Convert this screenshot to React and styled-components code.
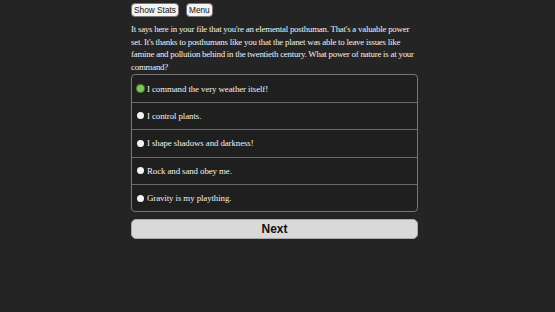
import React, { useState } from "react";
import styled, { createGlobalStyle } from "styled-components";

const Global = createGlobalStyle`
  html, body {
    margin: 0;
    background: #242424;
    color: #eeeeee;
  }
`;

const Page = styled.div`
  box-sizing: border-box;
  width: 293px;
  padding-right: 6px;
  margin: 0 auto;
  padding-top: 3px;
`;

const Toolbar = styled.div`
  display: flex;
  gap: 7px;
`;

const ToolButton = styled.button`
  font-family: "Liberation Sans", Arial, sans-serif;
  font-size: 8.3px;
  line-height: 10px;
  padding: 1px 2px;
  background: #f4f4f4;
  color: #111;
  border: 1px solid #777;
  border-radius: 4px;
`;

const Story = styled.p`
  margin: 6px 0 0;
  font-family: "Liberation Serif", "Times New Roman", serif;
  font-size: 8.9px;
  letter-spacing: -0.24px;
  line-height: 12.6px;
  color: #f0f0f0;
`;

const Choices = styled.div`
  margin-top: 1px;
  border: 1px solid #777;
  border-radius: 4px;
  overflow: hidden;
  background: #1f1f1f;
`;

const Choice = styled.label`
  display: flex;
  align-items: center;
  gap: 3px;
  height: 26.4px;
  padding-left: 5px;
  font-family: "Liberation Serif", "Times New Roman", serif;
  font-size: 8.9px;
  letter-spacing: -0.1px;
  color: #f0f0f0;
  cursor: pointer;
  & + & {
    border-top: 1px solid #6a6a6a;
  }
`;

const Dot = styled.span`
  width: 7px;
  height: 7px;
  border-radius: 50%;
  background: ${(p) => (p.$on ? "#7fc35b" : "#f4f4f4")};
  box-shadow: ${(p) => (p.$on ? "0 0 0 1px #4f7d3a" : "none")};
  flex: none;
`;

const NextButton = styled.button`
  display: block;
  width: 100%;
  margin-top: 7px;
  height: 20px;
  font-family: "Liberation Sans", Arial, sans-serif;
  font-weight: bold;
  font-size: 12px;
  color: #111;
  background: #d9d9d9;
  border: 1px solid #aaa;
  border-radius: 5px;
`;

const options = [
  "I command the very weather itself!",
  "I control plants.",
  "I shape shadows and darkness!",
  "Rock and sand obey me.",
  "Gravity is my plaything.",
];

export default function App() {
  const [picked, setPicked] = useState(0);
  return (
    <>
      <Global />
      <Page>
        <Toolbar>
          <ToolButton>Show Stats</ToolButton>
          <ToolButton>Menu</ToolButton>
        </Toolbar>
        <Story>
          It says here in your file that you're an elemental posthuman. That's a valuable power
          set. It's thanks to posthumans like you that the planet was able to leave issues like
          famine and pollution behind in the twentieth century. What power of nature is at your
          command?
        </Story>
        <Choices>
          {options.map((o, i) => (
            <Choice key={o} onClick={() => setPicked(i)}>
              <Dot $on={picked === i} />
              {o}
            </Choice>
          ))}
        </Choices>
        <NextButton>Next</NextButton>
      </Page>
    </>
  );
}
